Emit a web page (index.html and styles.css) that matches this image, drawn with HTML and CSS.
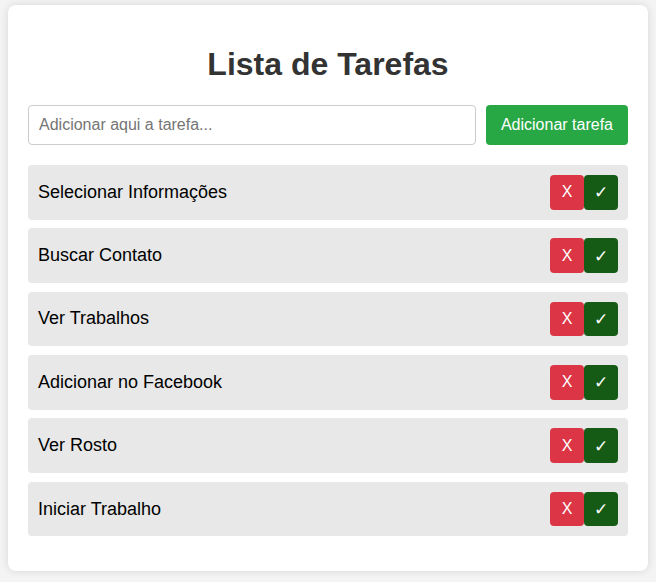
FILE: index.html
```html
<!DOCTYPE html>
<html lang="pt">
<head>
<meta charset="UTF-8">
<title>Lista de Tarefas</title>
<link rel="stylesheet" href="styles.css">
</head>
<body>
<div class="container">
  <h1 class="title">Lista de Tarefas</h1>
  <div class="add-row">
    <input class="task-input" type="text" placeholder="Adicionar aqui a tarefa...">
    <button class="add-btn">Adicionar tarefa</button>
  </div>
  <ul class="task-list">
    <li class="task"><span class="task-text">Selecionar Informações</span><div class="actions"><button class="btn-del">X</button><button class="btn-done">✓</button></div></li>
    <li class="task"><span class="task-text">Buscar Contato</span><div class="actions"><button class="btn-del">X</button><button class="btn-done">✓</button></div></li>
    <li class="task"><span class="task-text">Ver Trabalhos</span><div class="actions"><button class="btn-del">X</button><button class="btn-done">✓</button></div></li>
    <li class="task"><span class="task-text">Adicionar no Facebook</span><div class="actions"><button class="btn-del">X</button><button class="btn-done">✓</button></div></li>
    <li class="task"><span class="task-text">Ver Rosto</span><div class="actions"><button class="btn-del">X</button><button class="btn-done">✓</button></div></li>
    <li class="task"><span class="task-text">Iniciar Trabalho</span><div class="actions"><button class="btn-del">X</button><button class="btn-done">✓</button></div></li>
  </ul>
</div>
</body>
</html>
```
FILE: styles.css
```css
html, body {
  margin: 0;
  padding: 0;
}
body {
  background: #f4f4f4;
  font-family: "Liberation Sans", Arial, sans-serif;
  padding: 5px 8px;
}
.container {
  max-width: 600px;
  margin: 0 auto;
  background: #fff;
  padding: 20px;
  border-radius: 8px;
  box-shadow: 0 0 10px rgba(0, 0, 0, 0.12);
}
.title {
  text-align: center;
  color: #333;
  font-size: 32px;
  margin: 21.44px 0;
}
.add-row {
  display: flex;
  margin-bottom: 20px;
}
.task-input {
  flex: 1;
  padding: 10px;
  font-size: 16px;
  font-family: "Liberation Sans", Arial, sans-serif;
  border: 1px solid #ccc;
  border-radius: 4px;
  outline: none;
}
.task-input::placeholder {
  color: #757575;
}
.add-btn {
  margin-left: 10px;
  padding: 10px 15px;
  font-size: 16px;
  font-family: "Liberation Sans", Arial, sans-serif;
  background: #28a745;
  color: #fff;
  border: none;
  border-radius: 4px;
}
.task-list {
  list-style: none;
  padding: 0;
  margin: 0 0 15px 0;
}
.task {
  display: flex;
  justify-content: space-between;
  align-items: center;
  background: #e8e8e8;
  padding: 10px;
  margin-bottom: 8.7px;
  border-radius: 4px;
  font-size: 18px;
  color: #000;
}
.actions {
  display: flex;
}
.btn-del, .btn-done {
  width: 34px;
  height: 34.7px;
  padding: 0;
  border: none;
  border-radius: 4px;
  color: #fff;
  font-size: 16px;
  font-family: "Liberation Sans", Arial, sans-serif;
}
.btn-del {
  background: #dc3545;
}
.btn-done {
  background: #155a15;
  font-family: "DejaVu Sans", sans-serif;
  font-size: 17px;
}
```
